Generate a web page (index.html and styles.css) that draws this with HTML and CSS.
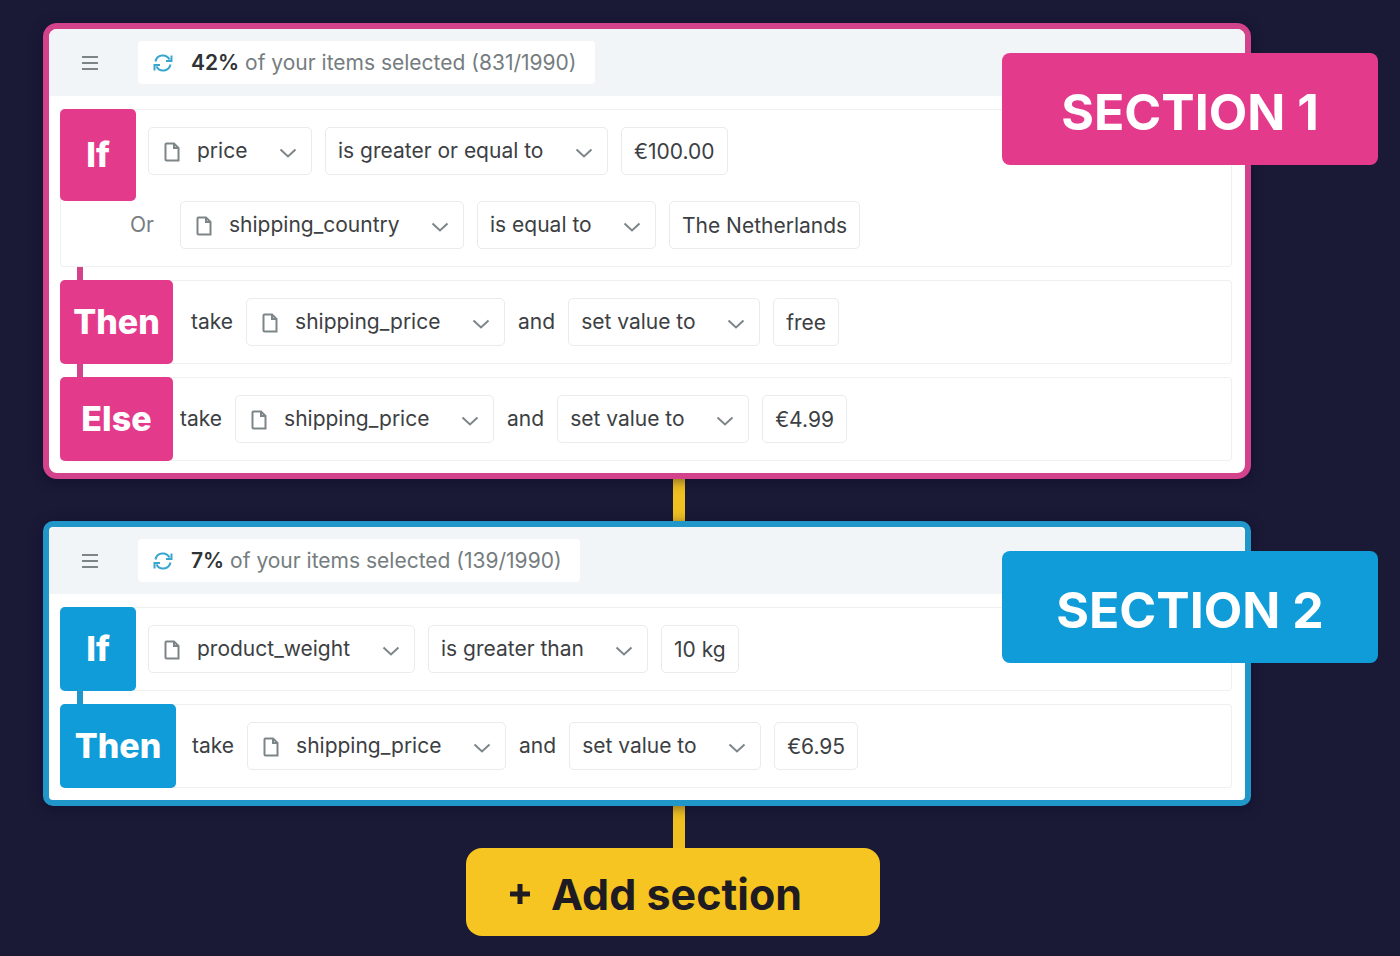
FILE: index.html
```html
<!DOCTYPE html>
<html lang="en">
  <head>
    <meta charset="UTF-8" />
    <meta name="viewport" content="width=device-width, initial-scale=1.0" />
    <title>Rule sections</title>
    <link rel="stylesheet" href="styles.css" />
  </head>
  <body>
    <!-- Shared icons -->
    <svg class="sprite" aria-hidden="true">
      <symbol id="icon-menu" viewBox="0 0 18 16">
        <path d="M1 2h16M1 8h16M1 14h16" />
      </symbol>
      <symbol id="icon-file" viewBox="0 0 16 20">
        <path d="M2.500 1.500h7.500L14.500 6v12.500h-12a1 1 0 0 1-1-1v-15a1 1 0 0 1 1-1z" />
        <path d="M10 1.500V6h4.500" />
      </symbol>
      <symbol id="icon-chevron" viewBox="0 0 18 10">
        <path d="M1.500 1.500L9 8.500l7.500-7" />
      </symbol>
      <symbol id="icon-refresh" viewBox="0 0 20 18">
        <path d="M2.500 7.500A7.500 7.500 0 0 1 16.500 5.500M18.500 1.500v5.500h-5.500M17.500 10.500A7.500 7.500 0 0 1 3.500 12.500M1.500 16.500V11h5.500" />
      </symbol>
    </svg>

    <main class="flow">
      <section class="card pink">
        <header class="card-header">
          <button class="menu" type="button" aria-label="Menu">
            <svg class="icon-menu"><use href="#icon-menu" /></svg>
          </button>
          <p class="status">
            <svg class="icon-refresh"><use href="#icon-refresh" /></svg>
            <span><strong>42%</strong> of your items selected (831/1990)</span>
          </p>
        </header>
        <h2 class="card-label">SECTION 1</h2>
        <div class="rules">
          <div class="rule">
            <div class="line">
              <span class="tag tag-if tag-tall">If</span>
              <div class="controls">
                <div class="field">
                  <svg class="icon-file"><use href="#icon-file" /></svg>
                  <select class="with-icon" aria-label="Field"><option>price</option></select>
                  <svg class="icon-chevron"><use href="#icon-chevron" /></svg>
                </div>
                <div class="field">
                  <select aria-label="Operator"><option>is greater or equal to</option></select>
                  <svg class="icon-chevron"><use href="#icon-chevron" /></svg>
                </div>
                <input class="value" type="text" value="€100.00" aria-label="Value" />
              </div>
            </div>
            <div class="line line-or">
              <span class="or">Or</span>
              <div class="field">
                <svg class="icon-file"><use href="#icon-file" /></svg>
                <select class="with-icon" aria-label="Field"><option>shipping_country</option></select>
                <svg class="icon-chevron"><use href="#icon-chevron" /></svg>
              </div>
              <div class="field">
                <select aria-label="Operator"><option>is equal to</option></select>
                <svg class="icon-chevron"><use href="#icon-chevron" /></svg>
              </div>
              <input class="value" type="text" value="The Netherlands" aria-label="Value" />
            </div>
          </div>

          <div class="rule linked">
            <div class="line">
              <span class="tag">Then</span>
              <div class="controls action">
                <span>take</span>
                <div class="field">
                  <svg class="icon-file"><use href="#icon-file" /></svg>
                  <select class="with-icon" aria-label="Field"><option>shipping_price</option></select>
                  <svg class="icon-chevron"><use href="#icon-chevron" /></svg>
                </div>
                <span>and</span>
                <div class="field">
                  <select aria-label="Action"><option>set value to</option></select>
                  <svg class="icon-chevron"><use href="#icon-chevron" /></svg>
                </div>
                <input class="value" type="text" value="free" aria-label="Value" />
              </div>
            </div>
          </div>

          <div class="rule linked">
            <div class="line">
              <span class="tag">Else</span>
              <div class="controls action-near">
                <span>take</span>
                <div class="field">
                  <svg class="icon-file"><use href="#icon-file" /></svg>
                  <select class="with-icon" aria-label="Field"><option>shipping_price</option></select>
                  <svg class="icon-chevron"><use href="#icon-chevron" /></svg>
                </div>
                <span>and</span>
                <div class="field">
                  <select aria-label="Action"><option>set value to</option></select>
                  <svg class="icon-chevron"><use href="#icon-chevron" /></svg>
                </div>
                <input class="value" type="text" value="€4.99" aria-label="Value" />
              </div>
            </div>
          </div>
        </div>
      </section>

      <div class="connector"></div>

      <section class="card blue">
        <header class="card-header">
          <button class="menu" type="button" aria-label="Menu">
            <svg class="icon-menu"><use href="#icon-menu" /></svg>
          </button>
          <p class="status">
            <svg class="icon-refresh"><use href="#icon-refresh" /></svg>
            <span><strong>7%</strong> of your items selected (139/1990)</span>
          </p>
        </header>
        <h2 class="card-label">SECTION 2</h2>
        <div class="rules">
          <div class="rule">
            <div class="line">
              <span class="tag tag-if">If</span>
              <div class="controls">
                <div class="field">
                  <svg class="icon-file"><use href="#icon-file" /></svg>
                  <select class="with-icon" aria-label="Field"><option>product_weight</option></select>
                  <svg class="icon-chevron"><use href="#icon-chevron" /></svg>
                </div>
                <div class="field">
                  <select aria-label="Operator"><option>is greater than</option></select>
                  <svg class="icon-chevron"><use href="#icon-chevron" /></svg>
                </div>
                <input class="value" type="text" value="10 kg" aria-label="Value" />
              </div>
            </div>
          </div>

          <div class="rule linked">
            <div class="line">
              <span class="tag tag-wide">Then</span>
              <div class="controls action-mid">
                <span>take</span>
                <div class="field">
                  <svg class="icon-file"><use href="#icon-file" /></svg>
                  <select class="with-icon" aria-label="Field"><option>shipping_price</option></select>
                  <svg class="icon-chevron"><use href="#icon-chevron" /></svg>
                </div>
                <span>and</span>
                <div class="field">
                  <select aria-label="Action"><option>set value to</option></select>
                  <svg class="icon-chevron"><use href="#icon-chevron" /></svg>
                </div>
                <input class="value" type="text" value="€6.95" aria-label="Value" />
              </div>
            </div>
          </div>
        </div>
      </section>

      <div class="connector"></div>

      <button class="add" type="button">
        <svg class="icon-plus" viewBox="0 0 22 22" aria-hidden="true"><path d="M11 1v20M1 11h20" /></svg>
        <span>Add section</span>
      </button>
    </main>
  </body>
</html>
```
FILE: styles.css
```css
* {
  box-sizing: border-box;
}
body {
  margin: 0;
  min-height: 100vh;
  background: #1a1a37;
  color: #3c4043;
  font-family: Inter, "Liberation Sans", sans-serif;
  font-size: 21px;
  line-height: 28px;
}
.sprite {
  display: none;
}
svg {
  fill: none;
  flex: none;
}
.flow {
  padding: 23px 149px 20px 43px;
}

/* Cards */
.card {
  position: relative;
  border: 6px solid var(--edge);
  border-radius: 14px;
  background: #fff;
  box-shadow: 0 2px 12px rgba(10, 8, 40, 0.5);
}
.pink {
  --main: #e43a8b;
  --edge: #d2438c;
}
.blue {
  --main: #109cd8;
  --edge: #2196c8;
  border-radius: 10px;
}
.card-header {
  display: flex;
  align-items: center;
  gap: 30px;
  height: 67px;
  padding-left: 23px;
  border-radius: 8px 8px 0 0;
  background: #f2f5f7;
}
.menu {
  display: flex;
  align-items: center;
  justify-content: center;
  width: 36px;
  height: 36px;
  padding: 0;
  border: none;
  background: none;
  cursor: pointer;
}
.icon-menu {
  width: 18px;
  height: 16px;
  stroke: #7d8588;
  stroke-width: 2;
}
.status {
  display: flex;
  align-items: center;
  gap: 18px;
  height: 43px;
  margin: 0;
  padding: 0 18px 0 15px;
  border-radius: 4px;
  background: #fff;
  color: #757d80;
}
.status strong {
  color: #303336;
  font-weight: 600;
}
.icon-refresh {
  width: 20px;
  height: 18px;
  stroke: #3aa6cf;
  stroke-width: 2;
}
.card-label {
  position: absolute;
  top: 24px;
  right: -133px;
  z-index: 1;
  display: flex;
  align-items: center;
  justify-content: center;
  width: 376px;
  height: 112px;
  margin: 0;
  padding-top: 6px;
  border-radius: 8px;
  background: var(--main);
  color: #fff;
  font-size: 50px;
  font-weight: 700;
}

/* Rules */
.rules {
  display: flex;
  flex-direction: column;
  gap: 13px;
  padding: 13px 13px 12px 11px;
}
.rule {
  position: relative;
  border-radius: 4px;
  box-shadow: inset 0 0 0 1px #eff1f1;
}
.linked::before {
  content: "";
  position: absolute;
  top: -13px;
  left: 17px;
  width: 6px;
  height: 13px;
  background: var(--edge);
}
.line,
.controls {
  display: flex;
  align-items: center;
  gap: 13px;
}
.line {
  align-items: flex-start;
  gap: 12px;
}
.controls {
  padding-top: 18px;
}
.action {
  padding-left: 6px;
}
.action-mid {
  padding-left: 4px;
}
.action-near {
  margin-left: -5px;
}
.line-or {
  align-items: center;
  gap: 13px;
  padding: 0 0 18px 70px;
}
.or {
  width: 37px;
  color: #757d80;
}
.tag {
  display: flex;
  align-items: center;
  justify-content: center;
  width: 113px;
  height: 84px;
  border-radius: 5px;
  background: var(--main);
  color: #fff;
  font-size: 34px;
  font-weight: 800;
}
.tag-if {
  width: 76px;
}
.tag-wide {
  width: 116px;
}
.tag-tall {
  height: 92px;
}

/* Controls */
.field {
  position: relative;
}
.field select,
.value {
  display: block;
  height: 48px;
  margin: 0;
  border: 1px solid #e9ebec;
  border-radius: 5px;
  background: #fff;
  color: #3c4043;
  font: inherit;
}
.field select {
  appearance: none;
  padding: 0 63px 0 12px;
  cursor: pointer;
}
.field .with-icon {
  padding-left: 48px;
}
.value {
  field-sizing: content;
  padding: 0 12px;
}
.icon-file,
.icon-chevron {
  position: absolute;
  pointer-events: none;
}
.icon-file {
  top: 15px;
  left: 16px;
  width: 16px;
  height: 20px;
  stroke: #7d8588;
  stroke-width: 2;
}
.icon-chevron {
  top: 21px;
  right: 15px;
  width: 18px;
  height: 10px;
  stroke: #7d8588;
  stroke-width: 2;
}

/* Links between sections */
.connector {
  width: 12px;
  height: 42px;
  margin-left: calc(50% + 26px);
  background: #f0c022;
}
.add {
  display: flex;
  align-items: center;
  gap: 20px;
  width: 414px;
  height: 88px;
  margin-left: calc(50% - 181px);
  padding: 4px 0 0 43px;
  border: none;
  border-radius: 16px;
  background: #f6c522;
  color: #1e1b22;
  font: 700 43px/48px Inter, "Liberation Sans", sans-serif;
  cursor: pointer;
}
.icon-plus {
  width: 22px;
  height: 22px;
  stroke: #1e1b22;
  stroke-width: 5;
}
```
